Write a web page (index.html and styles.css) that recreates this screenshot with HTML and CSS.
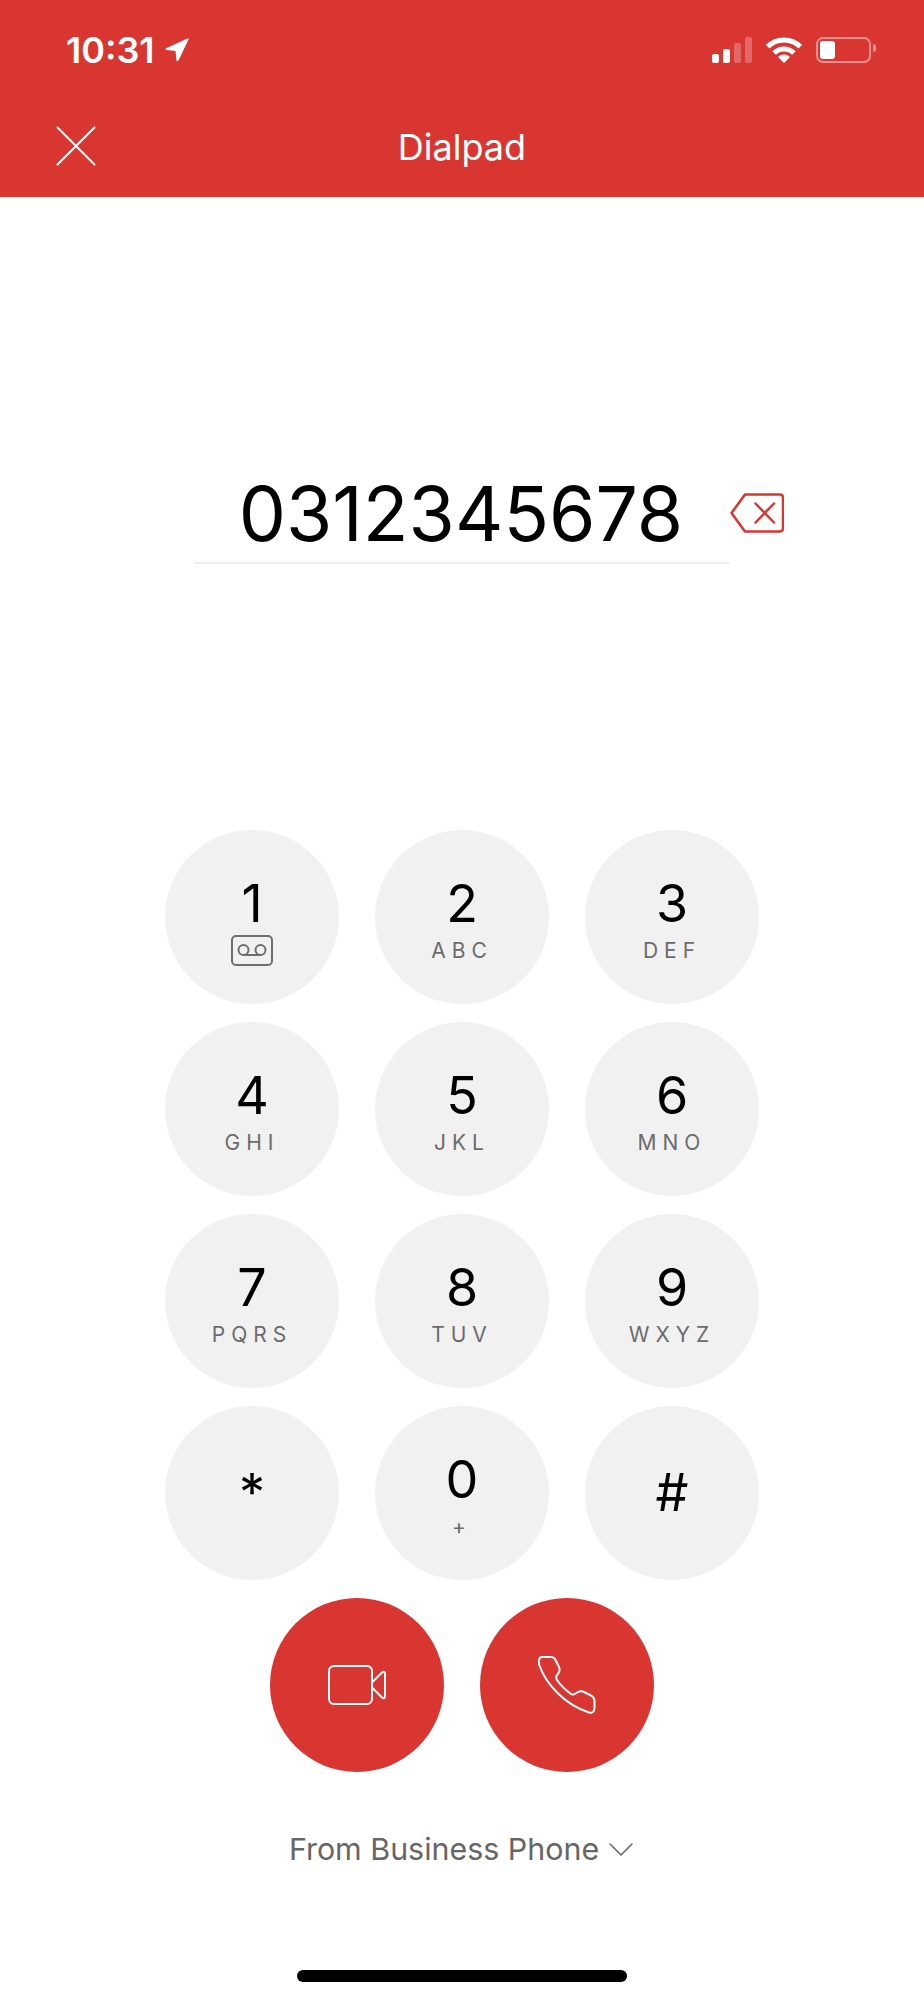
FILE: index.html
```html
<!DOCTYPE html>
<html lang="en">
<head>
  <meta charset="UTF-8" />
  <meta name="viewport" content="width=device-width, initial-scale=1.0"/>
  <title>Dialpad</title>
  <link rel="stylesheet" href="styles.css">
</head>
<body>
  <header class="header">
    <div class="status-bar">
      <div class="status-time">
        <span>10:31</span>
        <svg class="location-icon" width="24" height="24" viewBox="0 0 24 24">
          <path d="M.5 10.500Q.2 11.800 1.500 12L10.500 13 11.500 22.500Q12 24 13.500 22.500L23.500 1.500Q24 0 22.500 .5Z" fill="#fff"/>
        </svg>
      </div>
      <div class="status-icons">
        <div class="signal">
          <span class="bar bar-1"></span>
          <span class="bar bar-2"></span>
          <span class="bar bar-3 off"></span>
          <span class="bar bar-4 off"></span>
        </div>
        <svg class="wifi-icon" width="36" height="26" viewBox="0 0 36 26" fill="none" stroke="#fff" stroke-width="5">
          <path d="M1.7 9.7A23 23 0 0 1 34.3 9.7"/>
          <path d="M8.1 16.1A14 14 0 0 1 27.9 16.1"/>
          <path d="M18 26 12 20A8.5 8.5 0 0 1 24 20Z" fill="#fff" stroke="none"/>
        </svg>
        <div class="battery">
          <div class="battery-level"></div>
        </div>
      </div>
    </div>
    <nav class="nav-bar">
      <svg class="close-icon" width="40" height="40" viewBox="0 0 40 40" stroke="#fff" stroke-width="2" stroke-linecap="round">
        <path d="M1.5 1.5 38.5 38.5M38.5 1.5 1.5 38.5"/>
      </svg>
      <h1 class="nav-title">Dialpad</h1>
    </nav>
  </header>

  <main class="dialer">
    <div class="number-row">
      <div class="number-field">0312345678</div>
      <svg class="backspace-icon" width="54" height="40" viewBox="0 0 54 40" fill="none" stroke="#d93632" stroke-width="2.500" stroke-linejoin="round" stroke-linecap="round">
        <path d="M1.500 20 15 1.500H50Q53 1.500 53 4.500V35.500Q53 38.500 50 38.500H15Z"/>
        <path d="M25.500 10.500 44 29.500M44 10.500 25.500 29.500"/>
      </svg>
    </div>

    <div class="keypad">
      <button class="key">
        <span class="digit">1</span>
        <svg class="voicemail-icon" width="42" height="31" viewBox="0 0 42 31" fill="none" stroke="#6e6e6e" stroke-width="2">
          <rect x="1" y="1" width="40" height="29" rx="4"/>
          <circle cx="12.500" cy="15" r="5"/>
          <circle cx="29.500" cy="15" r="5"/>
          <path d="M12.500 20H29.500"/>
        </svg>
      </button>
      <button class="key"><span class="digit">2</span><span class="letters">ABC</span></button>
      <button class="key"><span class="digit">3</span><span class="letters">DEF</span></button>
      <button class="key"><span class="digit">4</span><span class="letters">GHI</span></button>
      <button class="key"><span class="digit">5</span><span class="letters">JKL</span></button>
      <button class="key"><span class="digit">6</span><span class="letters">MNO</span></button>
      <button class="key"><span class="digit">7</span><span class="letters">PQRS</span></button>
      <button class="key"><span class="digit">8</span><span class="letters">TUV</span></button>
      <button class="key"><span class="digit">9</span><span class="letters">WXYZ</span></button>
      <button class="key key-symbol"><span class="digit">*</span></button>
      <button class="key"><span class="digit">0</span><span class="letters">+</span></button>
      <button class="key key-symbol"><span class="digit">#</span></button>
    </div>

    <div class="call-actions">
      <button class="call-button">
        <svg width="58" height="40" viewBox="0 0 58 40" fill="none" stroke="#fff" stroke-width="2" stroke-linejoin="round">
          <rect x="1" y="1" width="43" height="38" rx="5"/>
          <path d="M44 17.500 54 7.500Q57 5.500 57 9V31Q57 34.500 54 32.500L44 22.500"/>
        </svg>
      </button>
      <button class="call-button">
        <svg width="58" height="58" viewBox="0 0 58 58" fill="none" stroke="#fff" stroke-width="2" stroke-linejoin="round">
          <path d="M4 1H13C15.500 1 16.500 2 17.500 4L21 11C22 13.500 22 15 20.500 17L18.500 20C18 21.500 18 22.500 19 24C23 30 27.500 34 33 38C34.500 39 36 38.500 37.500 37.500L40 36C42 35 44 35 46 36L52 39C55 40.500 56.500 42 56.500 45V52C56.500 55.500 54 57.500 51 56.500C28 49 8 29 1.300 9C.3 5 1 1 4 1Z"/>
        </svg>
      </button>
    </div>

    <div class="call-source">
      <span>From Business Phone</span>
      <svg width="24" height="13" viewBox="0 0 24 13" fill="none" stroke="#666" stroke-width="1.500" stroke-linecap="round">
        <path d="M1 1 12 12 23 1"/>
      </svg>
    </div>

    <div class="home-bar"></div>
  </main>
</body>
</html>
```

FILE: styles.css
```css
body {
  margin: 0;
  font-family: 'Inter', 'Liberation Sans', sans-serif;
  background: #fff;
  color: #000;
}

button {
  font-family: inherit;
  border: none;
  padding: 0;
  cursor: pointer;
}

.header {
  background-color: #d93632;
  color: #fff;
  height: 197px;
}

.status-bar {
  height: 100px;
  display: flex;
  justify-content: space-between;
  align-items: center;
  padding: 0 53px 0 66px;
}

.status-time {
  display: flex;
  align-items: center;
  gap: 10px;
  font-size: 36px;
  font-weight: 600;
}

.status-icons {
  display: flex;
  align-items: center;
}

.signal {
  display: flex;
  align-items: flex-end;
  gap: 4px;
  height: 26px;
  margin-right: 14px;
}

.bar {
  width: 7px;
  background: #fff;
  border-radius: 2px;
}

.bar.off {
  background: rgba(255, 255, 255, 0.25);
}

.bar-1 { height: 9px; }
.bar-2 { height: 14px; }
.bar-3 { height: 20px; }
.bar-4 { height: 26px; }

.battery {
  position: relative;
  width: 55px;
  height: 26px;
  margin-left: 14px;
  padding: 2px;
  box-sizing: border-box;
  border: 2px solid rgba(255, 255, 255, 0.45);
  border-radius: 7px;
}

/* terminal nub on the right end of the battery */
.battery::after {
  content: "";
  position: absolute;
  top: 5px;
  right: -7px;
  width: 3px;
  height: 8px;
  background: rgba(255, 255, 255, 0.45);
  border-radius: 0 3px 3px 0;
}

.battery-level {
  width: 15px;
  height: 100%;
  background: #fff;
  border-radius: 3px;
}

.nav-bar {
  height: 97px;
  display: grid;
  grid-template-columns: 1fr auto 1fr;
  align-items: center;
  padding: 0 0 3px 56px;
  box-sizing: border-box;
}

.nav-title {
  margin: 0;
  font-size: 36px;
  font-weight: 400;
  grid-column: 2;
  grid-row: 1;
  transform: translateX(-28px);
}

.close-icon {
  grid-column: 1;
  grid-row: 1;
  margin-bottom: 3px;
}

.dialer {
  display: flex;
  flex-direction: column;
  align-items: center;
}

.number-row {
  align-self: flex-start;
  display: flex;
  align-items: center;
  margin: 271px 0 0 194px;
}

.number-field {
  width: 536px;
  height: 94px;
  line-height: 92px;
  text-align: center;
  text-indent: -2px;
  font-size: 75px;
  border-bottom: 2px solid #f0f0f0;
}

.backspace-icon {
  margin-top: -6px;
}

.keypad {
  display: grid;
  grid-template-columns: repeat(3, 174px);
  gap: 18px 36px;
  margin-top: 266px;
}

.key {
  width: 174px;
  height: 174px;
  border-radius: 50%;
  background: #f1f1f1;
  color: #000;
  display: flex;
  flex-direction: column;
  align-items: center;
  padding-top: 47px;
  box-sizing: border-box;
}

.key-symbol {
  justify-content: center;
  padding-top: 0;
}

.digit {
  font-size: 52px;
  line-height: 54px;
}

.letters {
  margin-top: 8px;
  font-size: 21px;
  line-height: 24px;
  letter-spacing: 6px;
  color: #6b6b6b;
}

.voicemail-icon {
  margin-top: 4px;
}

.call-actions {
  display: flex;
  gap: 36px;
  margin-top: 18px;
}

.call-button {
  width: 174px;
  height: 174px;
  border-radius: 50%;
  background-color: #d93632;
  display: flex;
  align-items: center;
  justify-content: center;
}

.call-source {
  display: flex;
  align-items: center;
  gap: 10px;
  margin: 58px 2px 0 0;
  font-size: 30.4px;
  line-height: 38px;
  color: #666;
}

.home-bar {
  width: 330px;
  height: 12px;
  margin-top: 102px;
  background: #000;
  border-radius: 6px;
}
```
